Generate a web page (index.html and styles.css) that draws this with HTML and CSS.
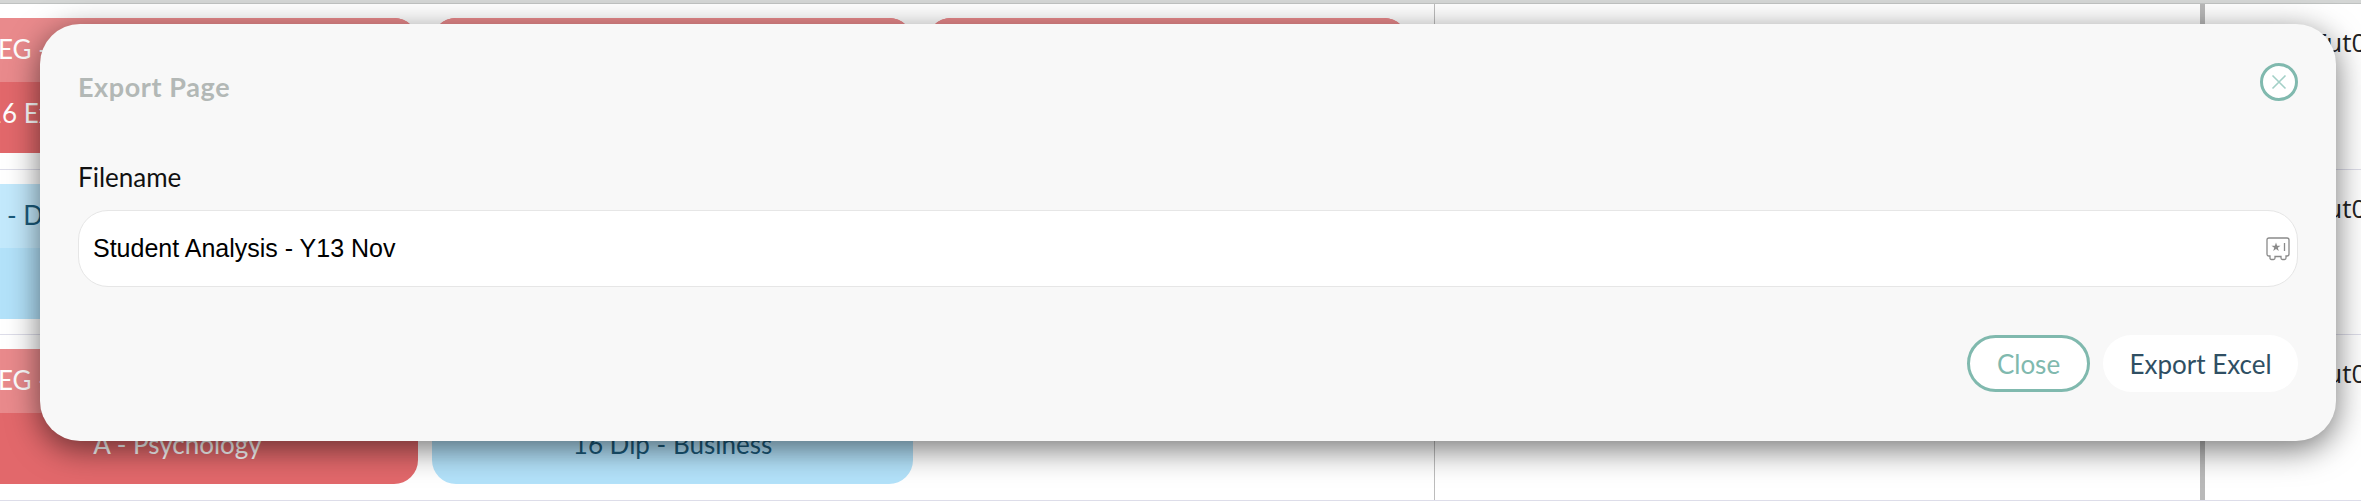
FILE: index.html
```html
<!DOCTYPE html>
<html>
<head>
    <title>Export Page</title>
    <meta charset="utf-8"/>
    <link rel="stylesheet" href="styles.css">
</head>
<body>
<div class="topbar"></div>
<div class="tt_row">
    <div class="tt_cards">
        <div class="tt_card red"><div class="tt_head">EG - Psychology</div><div class="tt_body">16 Extended Project</div></div>
        <div class="tt_card red"><div class="tt_head"></div><div class="tt_body"></div></div>
        <div class="tt_card red"><div class="tt_head"></div><div class="tt_body"></div></div>
    </div>
    <div class="tt_mid"></div>
    <div class="tt_tutor">Tut0</div>
</div>
<div class="tt_row">
    <div class="tt_cards">
        <div class="tt_card blue"><div class="tt_head">- Dip</div><div class="tt_body"></div></div>
    </div>
    <div class="tt_mid"></div>
    <div class="tt_tutor">Tut0</div>
</div>
<div class="tt_row">
    <div class="tt_cards">
        <div class="tt_card red"><div class="tt_head">EG - Psychology</div><div class="tt_body center">A - Psychology</div></div>
        <div class="tt_card blue"><div class="tt_head"></div><div class="tt_body center">16 Dip - Business</div></div>
    </div>
    <div class="tt_mid"></div>
    <div class="tt_tutor">Tut0</div>
</div>

<div class="modal">
    <div class="modal_top">
        <div class="modal_title">Export Page</div>
        <button class="modal_x" type="button">
            <svg width="16" height="16" viewBox="0 0 16 16"><path d="M1.5 1.5L14.5 14.5M14.5 1.5L1.5 14.5" stroke="#a3d0c7" stroke-width="1.6" fill="none"/></svg>
        </button>
    </div>
    <label class="modal_label" for="filename">Filename</label>
    <div class="modal_input">
        <input id="filename" class="txt" type="text" value="Student Analysis - Y13 Nov"/>
        <svg class="pw_icon" width="24" height="24" viewBox="0 0 24 24">
            <path d="M3 1H21Q23 1 23 3V17Q23 19 21 19H20V21Q20 22.5 18.5 22.5H16.500Q15 22.5 15 21V19.500H9V21Q9 22.5 7.500 22.500H5.500Q4 22.500 4 21V19H3Q1 19 1 17V3Q1 1 3 1Z" fill="none" stroke="#8a8a8a" stroke-width="1.3"/>
            <path d="M10 5.500L11.100 8.700H14.500L11.800 10.700L12.800 14L10 12L7.200 14L8.200 10.700L5.500 8.700H8.900Z" fill="#8a8a8a"/>
            <path d="M18.500 6V14" stroke="#8a8a8a" stroke-width="1.300"/>
        </svg>
    </div>
    <div class="modal_btns">
        <button class="btn btn_close" type="button">Close</button>
        <button class="btn btn_export" type="button">Export Excel</button>
    </div>
</div>
</body>
</html>
```

FILE: styles.css
```css
*{margin:0;padding:0;box-sizing:border-box;}
html,body{height:100%;overflow:hidden;}
body{
    position: relative;
    background: #fff;
    font-family: "Lato", "Open Sans", sans-serif;
    font-size: 26px;
}
.topbar{
    height: 4px;
    background: #d4d6d5;
    border-bottom: 1px solid #bfc2c1;
}
.tt_row{
    display: flex;
    height: 165.5px;
    border-bottom: 1px solid #dddde9;
}
.tt_row:last-of-type{
    border-bottom-color: #d8e0e8;
}
.tt_cards{
    flex: none;
    display: flex;
    align-items: flex-start;
    gap: 14px;
    width: 1435px;
    padding-top: 14px;
    border-right: 1px solid #bcbcbc;
    overflow: hidden;
}
.tt_card{
    flex: none;
    width: 481px;
    height: 135px;
    border-radius: 24px;
    overflow: hidden;
    display: flex;
    flex-direction: column;
}
.tt_card:first-child{
    margin-left: -63px;
}
.tt_card.red{background:#e2686b;color:#fff;}
.tt_card.blue{background:#b3e2fa;color:#1a5a7a;}
.tt_head{
    height: 64px;
    line-height: 62px;
    padding-left: 61px;
    white-space: nowrap;
}
.red .tt_head{background:#e98a8c;}
.blue .tt_head{background:#c3e9fc;padding-left:70px;}
.tt_body{
    flex: 1;
    line-height: 62px;
    padding-left: 50px;
    white-space: nowrap;
}
.tt_body.center{
    padding: 0;
    text-align: center;
}
.tt_mid{
    flex: none;
    width: 770px;
    border-right: 5px solid #b9b9b9;
}
.tt_tutor{
    padding: 20px 0 0 107px;
    font-family: "Open Sans", sans-serif;
    font-size: 26px;
    color: #222;
    white-space: nowrap;
}

.modal{
    position: absolute;
    left: 40px;
    top: 24px;
    width: 2296px;
    height: 417px;
    padding: 0 38px;
    background: #f8f8f8;
    border-radius: 40px;
    box-shadow: 0 8px 32px rgba(0,0,0,.55);
    display: flex;
    flex-direction: column;
}
.modal_top{
    display: flex;
    align-items: center;
    justify-content: space-between;
    height: 116px;
}
.modal_title{
    margin-top: 8px;
    font-size: 27px;
    letter-spacing: .6px;
    font-weight: 700;
    color: #b3b8b6;
}
.modal_x{
    width: 38px;
    height: 38px;
    border: 3px solid #80b9ae;
    border-radius: 50%;
    background: #fff;
    display: flex;
    align-items: center;
    justify-content: center;
}
.modal_label{
    margin-top: 22px;
    line-height: 30px;
    color: #111;
}
.modal_input{
    display: flex;
    align-items: center;
    height: 77px;
    margin-top: 18px;
    padding: 0 7px 0 14px;
    background: #fff;
    border: 1px solid #e6e6e6;
    border-radius: 30px;
}
.txt{
    flex: 1;
    border: none;
    outline: none;
    background: none;
    font-family: "Liberation Sans", Arial, sans-serif;
    font-size: 25px;
    color: #000;
}
.modal_btns{
    display: flex;
    justify-content: flex-end;
    gap: 13px;
    margin-top: 48px;
}
.btn{
    height: 57px;
    border-radius: 29px;
    font-family: "Lato", "Open Sans", sans-serif;
    font-size: 26px;
    background: #fff;
}
.btn_close{
    width: 123px;
    border: 3px solid #80b9ae;
    color: #80b9ae;
}
.btn_export{
    width: 195px;
    border: none;
    color: #2f4f63;
}
```
